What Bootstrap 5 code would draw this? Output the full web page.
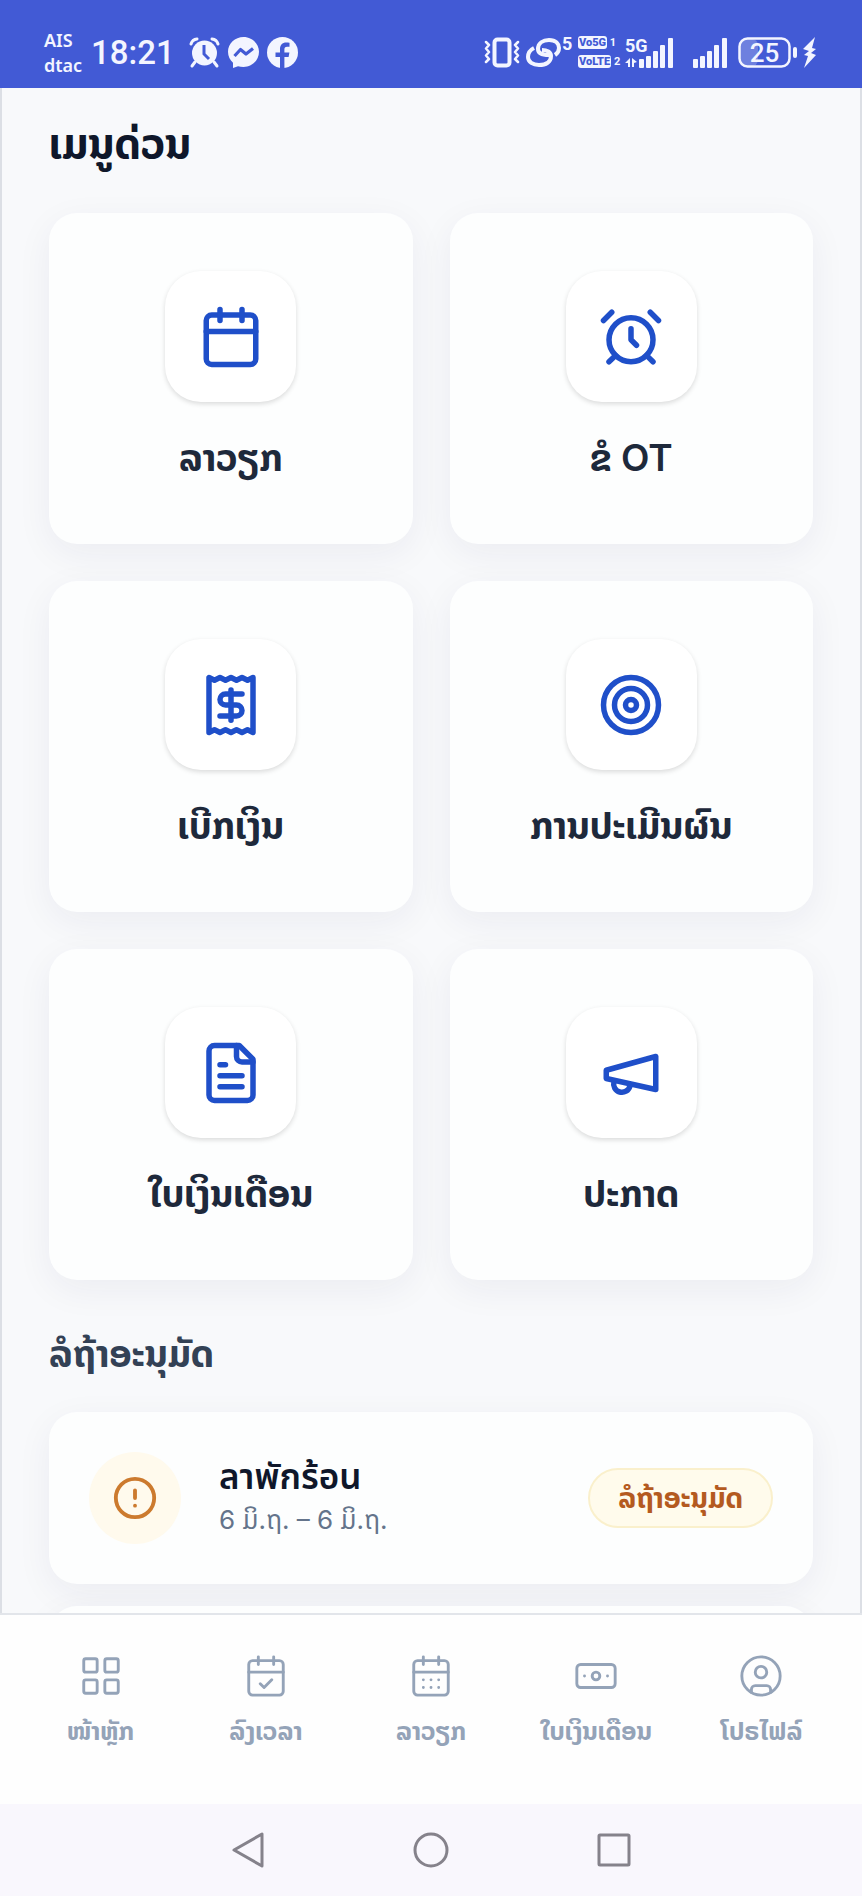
<!DOCTYPE html>
<html lang="lo">
<head>
<meta charset="utf-8">
<meta name="viewport" content="width=device-width, initial-scale=1">
<title>ເມນູດ່ວນ</title>
<link rel="stylesheet" href="https://cdn.jsdelivr.net/npm/bootstrap@5.3.0/dist/css/bootstrap.min.css">
<style>
  body { font-family: Inter, "Noto Sans Lao", "Noto Sans", "Noto Sans Thai", "DejaVu Sans", sans-serif; background: #f8f9fb; color: #1e293b; }
  svg { display: block; flex: none; overflow: visible; }
  .line-icon { fill: none; stroke: currentColor; stroke-linecap: round; stroke-linejoin: round; }

  .status-bar { background: #425ad5; color: #f3f5ff; height: 88px; padding: 17px 45px 0 44px; font-family: "Noto Sans", sans-serif; }
  .carriers { font-size: 18px; line-height: 25px; font-weight: 600; width: 47px; }
  .clock { font-family: Roboto, sans-serif; font-size: 33px; line-height: 40px; font-weight: 500; margin-right: 14px; }
  .status-icons { gap: 6px; }
  .sim-two { margin: 0 5px 0 13px; }
  .volte { font-family: Roboto, sans-serif; font-size: 11px; line-height: 14px; font-weight: 700; width: 41px; gap: 5px; white-space: nowrap; }
  .volte b { background: #f3f5ff; color: #425ad5; border-radius: 3px; padding: 0 1px; }

  .page-body { border: solid #dcdfe5; border-width: 0 2px; padding: 0 47px; background: #f8f9fb; }
  .page-title { font-size: 42px; line-height: 52px; font-weight: 700; color: #0f172a; margin: 30px 0 43px; }
  .sub-title { font-size: 37px; line-height: 48px; font-weight: 700; color: #334155; margin: 50px 0 34px; }
  .quick-grid { --bs-gutter-x: 37px; --bs-gutter-y: 37px; }
  .soft-card { background: #fdfefe; border: 0; border-radius: 28px; box-shadow: 0 10px 36px rgba(30, 41, 80, .06); }
  .quick-card { height: 331px; padding-top: 58px; color: #1e293b; font-size: 37px; line-height: 48px; font-weight: 700; }
  .quick-card .tile { width: 131px; height: 131px; border-radius: 36px; background: #fff; color: #1f4fc9; box-shadow: 0 2px 5px rgba(0, 0, 0, .14); margin-bottom: 32px; }
  .leave-card { height: 172px; padding: 0 40px; margin-bottom: 22px; gap: 38px; }
  .alert-dot { width: 92px; height: 92px; background: #fffaed; color: #cc7a2e; }
  .leave-name { font-size: 35px; line-height: 44px; font-weight: 600; color: #0f172a; }
  .leave-date { font-size: 26px; line-height: 44px; color: #64748b; }
  .wait-pill { font-size: 28px; line-height: 56px; font-weight: 700; color: #b45a1f; background: #fffbec; border: 2px solid #faf0cc; padding: 0 28px; }

  .tab-bar { background: #fefefe; border-top: 2px solid #e2e5ea; height: 191px; padding: 38px 18px 0; }
  .tab-bar a { color: #94a3b8; font-size: 25px; line-height: 32px; font-weight: 700; text-decoration: none; white-space: nowrap; flex: 1 1 0; }
  .system-bar { background: #f9f7fd; color: #85828b; height: 92px; gap: 147px; }
  .system-bar button { color: inherit; background: none; border: 0; padding: 0; }
</style>
</head>
<body>
<div class="d-flex flex-column vh-100 overflow-hidden">

  <header class="status-bar d-flex align-items-center justify-content-between flex-shrink-0">
    <div class="d-flex align-items-center">
      <div class="carriers">AIS<br>dtac</div>
      <div class="clock">18:21</div>
      <div class="d-flex gap-2">
        <svg width="31" height="31" viewBox="0 0 31 31"><circle cx="15.500" cy="16" r="12.500" fill="currentColor"/><path d="M2 7a7 7 0 0 1 6-5M29 7a7 7 0 0 0-6-5M6 25l-3 4M25 25l3 4" fill="none" stroke="currentColor" stroke-width="3" stroke-linecap="round"/><path d="M15 8v9l5 5" fill="none" stroke="#425ad5" stroke-width="3"/></svg>
        <svg width="31" height="31" viewBox="0 0 31 31"><path d="M15.500 0C7 0 0 6.500 0 14.800c0 4.600 2 8.300 5 11V31l5-1.800c1.700.5 3.600.8 5.500.8C24 30 31 23.300 31 14.800 31 6.500 24 0 15.500 0Z" fill="currentColor"/><path d="M6.500 19l6-6.500 5.500 4.500 7-5.500" fill="none" stroke="#425ad5" stroke-width="3.200" stroke-linejoin="round"/></svg>
        <svg width="31" height="31" viewBox="0 0 31 31"><circle cx="15.500" cy="15.500" r="15.500" fill="currentColor"/><path d="M13 31V20H8.500v-4.500H13v-3.200C13 8 15.300 5.500 19.300 5.500c1.400 0 2.600.1 3.200.3v4h-2.400c-2 0-2.700 1-2.700 2.700v3h5l-.8 4.500h-4.200v11Z" fill="#425ad5"/></svg>
      </div>
    </div>
    <div class="status-icons d-flex align-items-center">
      <svg class="line-icon" width="36" height="31" viewBox="0 0 36 31" stroke-width="2.500"><rect x="10.500" y="2.500" width="15" height="26" rx="3" stroke-width="4"/><path d="M2 5l3 3-3 3.500 3 3.500-3 3.500 3 3.500-3 3M34 5l-3 3 3 3.500-3 3.500 3 3.500-3 3.500 3 3"/></svg>
      <svg width="46" height="31" viewBox="0 0 46 31"><path d="M23 18c-6 0-11-1-11-6C12 6 17 3 23 3c7 0 10 4 10 8 0 3-1 5-4 7M8 11c-4 2-6 5-6 9 0 5 5 8 11 8 7 0 12-3 12-9 0-4-4-6-9-6" fill="none" stroke="currentColor" stroke-width="4"/><text x="36" y="13" font-family="Roboto" font-size="18" font-weight="700" fill="currentColor">5</text></svg>
      <div class="volte d-flex flex-column align-items-start">
        <span><b>Vo5G</b> 1</span>
        <span><b>VoLTE</b> 2</span>
      </div>
      <svg width="49" height="32" viewBox="0 0 49 32" fill="currentColor"><text x="0" y="15" font-family="Roboto" font-size="18" font-weight="700">5G</text><path d="M0 26l5-5v9H3v-4ZM7 21l5 4-3 1v4H7Z"/><rect x="14" y="22" width="5" height="9" rx="1"/><rect x="21" y="19" width="5" height="12" rx="1"/><rect x="28" y="14" width="5" height="17" rx="1"/><rect x="35" y="8" width="5" height="23" rx="1"/><rect x="43" y="1" width="5" height="30" rx="1"/></svg>
      <svg class="sim-two" width="34" height="32" viewBox="0 0 34 32" fill="currentColor"><rect y="22" width="5" height="9" rx="1"/><rect x="7" y="19" width="5" height="12" rx="1"/><rect x="14" y="14" width="5" height="17" rx="1"/><rect x="21" y="8" width="5" height="23" rx="1"/><rect x="29" y="1" width="5" height="30" rx="1"/></svg>
      <svg width="79" height="32" viewBox="0 0 79 32" fill="currentColor"><rect x="2" y="2" width="18" height="27" rx="6" opacity=".25"/><rect x="1.500" y="1.500" width="50" height="28" rx="8" fill="none" stroke="currentColor" stroke-width="2.500"/><text x="26.500" y="25" text-anchor="middle" font-family="Roboto" font-size="26" font-weight="500">25</text><rect x="55" y="10" width="4" height="11" rx="2"/><path d="M77 0L65 12l6 2-5 4 4 1-4 12 12-13-5-2 5-4-4-1Z"/></svg>
    </div>
  </header>

  <main class="page-body flex-grow-1 overflow-hidden">
    <h1 class="page-title">ເມນູດ່ວນ</h1>
    <div class="row row-cols-2 quick-grid">
      <div class="col"><a href="#" class="card soft-card quick-card align-items-center text-decoration-none">
        <span class="tile d-flex align-items-center justify-content-center"><svg class="line-icon" width="66" height="66" viewBox="0 0 24 24" stroke-width="2"><rect x="3" y="4" width="18" height="18" rx="2"/><path d="M8 2v4M16 2v4M3 10h18"/></svg></span>ລາວຽກ</a></div>
      <div class="col"><a href="#" class="card soft-card quick-card align-items-center text-decoration-none">
        <span class="tile d-flex align-items-center justify-content-center"><svg class="line-icon" width="66" height="66" viewBox="0 0 24 24" stroke-width="2"><circle cx="12" cy="13" r="8"/><path d="M12 9v4l2 2M5 3 2 6M22 6l-3-3M6.380 18.700 4 21M17.640 18.670 20 21"/></svg></span><span>ຂໍ <span class="fw-semibold">OT</span></span></a></div>
      <div class="col"><a href="#" class="card soft-card quick-card align-items-center text-decoration-none">
        <span class="tile d-flex align-items-center justify-content-center"><svg class="line-icon" width="66" height="66" viewBox="0 0 24 24" stroke-width="2"><path d="M4 2v20l2-1 2 1 2-1 2 1 2-1 2 1 2-1 2 1V2l-2 1-2-1-2 1-2-1-2 1-2-1-2 1Z"/><path d="M16 8h-6a2 2 0 1 0 0 4h4a2 2 0 1 1 0 4H8M12 17.500v-11"/></svg></span>ເບີກເງິນ</a></div>
      <div class="col"><a href="#" class="card soft-card quick-card align-items-center text-decoration-none">
        <span class="tile d-flex align-items-center justify-content-center"><svg class="line-icon" width="66" height="66" viewBox="0 0 24 24" stroke-width="2"><circle cx="12" cy="12" r="10"/><circle cx="12" cy="12" r="6"/><circle cx="12" cy="12" r="2"/></svg></span>ການປະເມີນຜົນ</a></div>
      <div class="col"><a href="#" class="card soft-card quick-card align-items-center text-decoration-none">
        <span class="tile d-flex align-items-center justify-content-center"><svg class="line-icon" width="66" height="66" viewBox="0 0 24 24" stroke-width="2"><path d="M15 2H6a2 2 0 0 0-2 2v16a2 2 0 0 0 2 2h12a2 2 0 0 0 2-2V7Z"/><path d="M14 2v4a2 2 0 0 0 2 2h4M10 9H8M16 13H8M16 17H8"/></svg></span>ໃບເງິນເດືອນ</a></div>
      <div class="col"><a href="#" class="card soft-card quick-card align-items-center text-decoration-none">
        <span class="tile d-flex align-items-center justify-content-center"><svg class="line-icon" width="66" height="66" viewBox="0 0 24 24" stroke-width="2"><path d="m3 11 18-5v12L3 14v-3z"/><path d="M11.600 16.800a3 3 0 1 1-5.800-1.600"/></svg></span>ປະກາດ</a></div>
    </div>

    <h2 class="sub-title">ລໍຖ້າອະນຸມັດ</h2>
    <section class="card soft-card leave-card flex-row align-items-center">
      <div class="alert-dot rounded-circle d-flex align-items-center justify-content-center flex-shrink-0"><svg class="line-icon" width="46" height="46" viewBox="0 0 24 24" stroke-width="2"><circle cx="12" cy="12" r="10"/><path d="M12 8v4M12 16h.01"/></svg></div>
      <div class="flex-grow-1">
        <div class="leave-name" lang="th">ลาพักร้อน</div>
        <div class="leave-date">6 ມິ.ຖ. – 6 ມິ.ຖ.</div>
      </div>
      <span class="wait-pill rounded-pill">ລໍຖ້າອະນຸມັດ</span>
    </section>
    <section class="card soft-card leave-card"></section>
  </main>

  <nav class="tab-bar d-flex align-items-start flex-shrink-0">
    <a href="#" class="d-flex flex-column align-items-center gap-3"><svg class="line-icon" width="46" height="46" viewBox="0 0 24 24" stroke-width="1.500"><rect x="3" y="3" width="7" height="7" rx="1"/><rect x="14" y="3" width="7" height="7" rx="1"/><rect x="14" y="14" width="7" height="7" rx="1"/><rect x="3" y="14" width="7" height="7" rx="1"/></svg><span>ໜ້າຫຼັກ</span></a>
    <a href="#" class="d-flex flex-column align-items-center gap-3"><svg class="line-icon" width="46" height="46" viewBox="0 0 24 24" stroke-width="1.500"><rect x="3" y="4" width="18" height="18" rx="2"/><path d="M8 2v4M16 2v4M3 10h18M9 16l2 2 4-4"/></svg><span>ລົງເວລາ</span></a>
    <a href="#" class="d-flex flex-column align-items-center gap-3"><svg class="line-icon" width="46" height="46" viewBox="0 0 24 24" stroke-width="1.500"><rect x="3" y="4" width="18" height="18" rx="2"/><path d="M8 2v4M16 2v4M3 10h18M8 14h.01M12 14h.01M16 14h.01M8 18h.01M12 18h.01M16 18h.01"/></svg><span>ລາວຽກ</span></a>
    <a href="#" class="d-flex flex-column align-items-center gap-3"><svg class="line-icon" width="46" height="46" viewBox="0 0 24 24" stroke-width="1.500"><rect x="2" y="6" width="20" height="12" rx="2"/><circle cx="12" cy="12" r="2"/><path d="M6 12h.01M18 12h.01"/></svg><span>ໃບເງິນເດືອນ</span></a>
    <a href="#" class="d-flex flex-column align-items-center gap-3"><svg class="line-icon" width="46" height="46" viewBox="0 0 24 24" stroke-width="1.500"><circle cx="12" cy="12" r="10"/><circle cx="12" cy="10" r="3"/><path d="M7 20.660V19a2 2 0 0 1 2-2h6a2 2 0 0 1 2 2v1.660"/></svg><span>ໂປຣໄຟລ໌</span></a>
  </nav>

  <div class="system-bar d-flex align-items-center justify-content-center flex-shrink-0">
    <button type="button" aria-label="Back"><svg class="line-icon" width="36" height="38" viewBox="0 0 36 38" stroke-width="3"><path d="M32 3v32L4 19Z"/></svg></button>
    <button type="button" aria-label="Home"><svg class="line-icon" width="36" height="38" viewBox="0 0 36 38" stroke-width="3"><circle cx="18" cy="19" r="16"/></svg></button>
    <button type="button" aria-label="Recent"><svg class="line-icon" width="36" height="38" viewBox="0 0 36 38" stroke-width="3"><rect x="3" y="4" width="30" height="30" rx="1"/></svg></button>
  </div>
</div>
<script src="https://cdn.jsdelivr.net/npm/bootstrap@5.3.0/dist/js/bootstrap.bundle.min.js"></script>
</body>
</html>
